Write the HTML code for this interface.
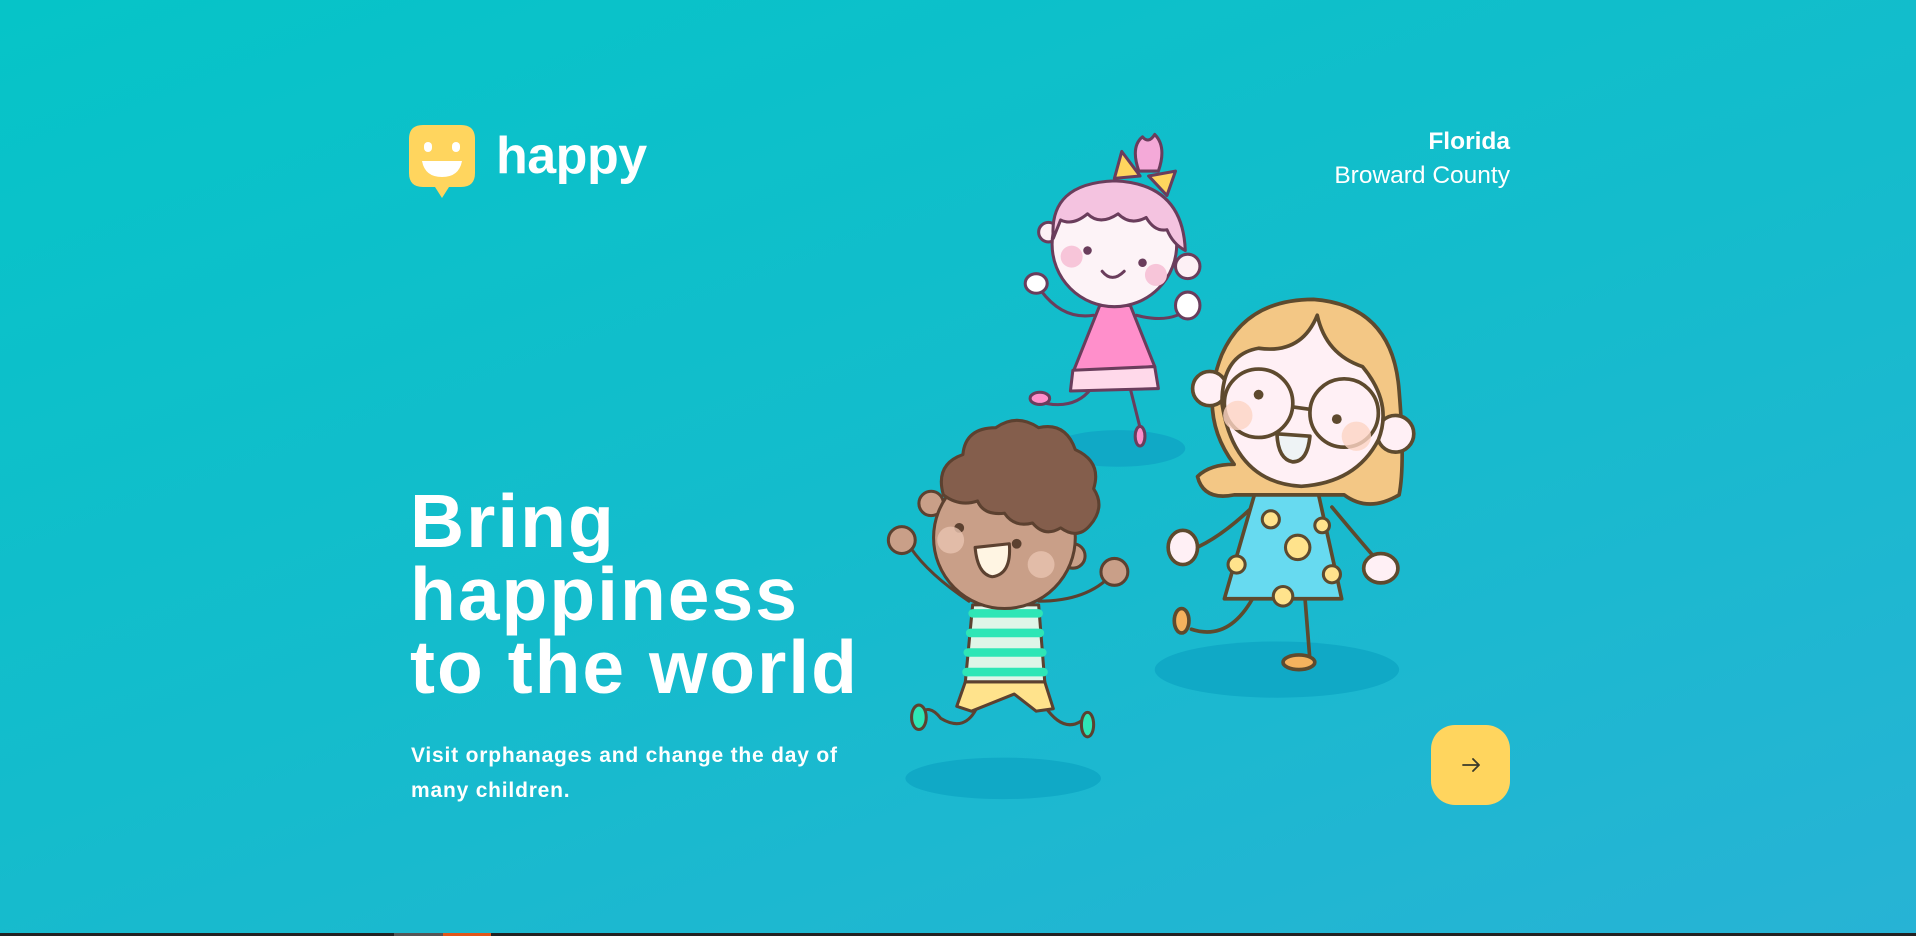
<!DOCTYPE html>
<html><head><meta charset="utf-8"><style>
html,body{margin:0;padding:0}
body{width:1916px;height:936px;overflow:hidden;position:relative;font-family:"Liberation Sans",sans-serif;color:#fff;
background:linear-gradient(160deg,#06c4c8 0%,#14bccc 50%,#27b3d5 100%)}
.logo{position:absolute;left:409px;top:125px}
.brand{position:absolute;left:496px;top:126px;font-size:52px;font-weight:bold;letter-spacing:-0.5px}
.loc{position:absolute;right:406px;top:125px;text-align:right;font-size:24.5px;line-height:34px}
h1{position:absolute;left:410px;top:485px;margin:0;font-size:75px;line-height:73px;font-weight:bold;letter-spacing:2px}
p{position:absolute;left:411px;top:738px;margin:0;font-size:21px;line-height:35px;font-weight:bold;letter-spacing:0.8px;width:490px}
.btn{position:absolute;left:1431px;top:725px;width:79px;height:80px;border-radius:24px;background:#ffd55e}
.bar{position:absolute;left:0;top:933px;width:1916px;height:3px;background:#222}
svg.ill{position:absolute;left:0;top:0}
</style></head><body>
<svg class="ill" width="1916" height="936" viewBox="0 0 1568 766">
<g fill="#10a9c6">
<ellipse cx="915" cy="367" rx="55" ry="15"/>
<ellipse cx="821" cy="637" rx="80" ry="17"/>
<ellipse cx="1045" cy="548" rx="100" ry="23"/>
</g>
<!-- pink girl -->
<g stroke="#6a3d5c" stroke-width="2.5" stroke-linecap="round" stroke-linejoin="round">
<path d="M895 258 Q870 262 852 238 M930 258 Q960 266 975 250 M893 318 Q880 335 855 330 M925 318 L935 358" fill="none"/>
<ellipse cx="848" cy="232" rx="9" ry="8" fill="#fff"/>
<ellipse cx="851" cy="326" rx="8" ry="5" fill="#ff8fcb"/>
<ellipse cx="933" cy="357" rx="4" ry="8" fill="#ff8fcb"/>
<path d="M900 250 L925 250 L945 300 L878 305 Z" fill="#ff8fcb"/>
<path d="M878 303 L945 300 L948 318 L876 320 Z" fill="#ffd9ea"/>
<circle cx="858" cy="190" r="8" fill="#fdf0f5"/>
<circle cx="972" cy="218" r="10" fill="#fdf0f5"/>
<circle cx="912" cy="200" r="51" fill="#fdf3f7"/>
<path d="M862 195 Q858 150 912 148 Q968 150 970 205 Q960 200 955 188 Q945 190 938 178 Q925 185 915 175 Q900 185 890 175 Q878 185 868 180 Z" fill="#f4c3e0"/>
<path d="M932 140 Q925 120 935 112 Q940 118 945 110 Q955 120 948 140 Z" fill="#f4a9d8"/>
<path d="M933 144 L918 124 L912 146 Z M940 144 L962 140 L955 160 Z" fill="#ffd55e"/>
<path d="M902 222 Q910 232 920 222" fill="none"/>
<ellipse cx="972" cy="250" rx="10" ry="11" fill="#fff"/>
</g>
<circle cx="890" cy="205" r="3.5" fill="#6a3d5c"/><circle cx="935" cy="215" r="3.5" fill="#6a3d5c"/>
<circle cx="877" cy="210" r="9" fill="#f7c5d9"/><circle cx="946" cy="225" r="9" fill="#f7c5d9"/>
<!-- boy -->
<g stroke="#5c4130" stroke-width="2.5" stroke-linecap="round" stroke-linejoin="round">
<path d="M793 492 Q760 470 745 448 M850 492 Q890 492 910 470 M800 578 Q790 600 770 588 Q760 575 752 585 M855 578 Q870 600 885 590" fill="none"/>
<ellipse cx="752" cy="587" rx="6" ry="10" fill="#2ee6b6"/>
<ellipse cx="890" cy="593" rx="5" ry="10" fill="#2ee6b6"/>
<path d="M790 558 L855 558 L862 580 L848 582 L830 568 L795 582 L783 578 Z" fill="#ffe38c"/>
<path d="M796 495 L850 495 L855 558 L790 558 Z" fill="#dff5e8"/>
<path d="M796 502 L850 502 M794 518 L851 518 M792 534 L853 534 M791 550 L854 550" stroke="#2ee6b6" stroke-width="7"/>
<circle cx="738" cy="442" r="11" fill="#c99f88"/>
<circle cx="912" cy="468" r="11" fill="#c99f88"/>
<circle cx="762" cy="412" r="10" fill="#c99f88"/>
<circle cx="878" cy="455" r="10" fill="#c99f88"/>
<circle cx="822" cy="440" r="58" fill="#c99f88"/>
<path d="M772 405 Q765 380 788 372 Q790 350 815 350 Q832 338 850 350 Q872 345 880 368 Q902 378 895 400 Q905 415 892 430 Q882 442 868 432 Q855 440 845 428 Q830 432 822 420 Q805 422 800 410 Q785 415 772 405 Z" fill="#845e4c"/>
<path d="M798 448 L826 445 Q828 470 812 472 Q800 470 798 448 Z" fill="#fff5e3"/>
</g>
<circle cx="785" cy="432" r="4" fill="#5c4130"/><circle cx="832" cy="445" r="4" fill="#5c4130"/>
<circle cx="778" cy="442" r="11" fill="#e8c3b0" opacity=".8"/><circle cx="852" cy="462" r="11" fill="#e8c3b0" opacity=".8"/>
<!-- blonde girl -->
<g stroke="#5e4a2e" stroke-width="3" stroke-linecap="round" stroke-linejoin="round">
<path d="M1030 410 Q1000 440 975 450 M1090 415 Q1115 445 1130 462 M1025 490 Q1005 525 975 515 M1068 490 L1072 540" fill="none"/>
<ellipse cx="967" cy="508" rx="6" ry="10" fill="#f4b25e"/>
<ellipse cx="1063" cy="542" rx="13" ry="6" fill="#f4b25e"/>
<ellipse cx="968" cy="448" rx="12" ry="14" fill="#fff0f5"/>
<ellipse cx="1130" cy="465" rx="14" ry="12" fill="#fff0f5"/>
<path d="M1028 400 L1078 400 L1098 490 L1002 490 Z" fill="#67daf0"/>
<path d="M1010 380 Q980 340 1000 290 Q1020 245 1075 245 Q1140 250 1145 320 Q1150 380 1145 405 Q1120 420 1100 405 L1010 405 Q985 410 980 390 Q990 380 1010 380 Z" fill="#f3c785"/>
<circle cx="990" cy="318" r="14" fill="#fff0f5"/>
<circle cx="1142" cy="355" r="15" fill="#fff0f5"/>
<path d="M1000 330 Q1000 290 1030 285 Q1065 290 1078 258 Q1085 290 1115 300 Q1140 330 1128 360 Q1110 395 1065 398 Q1010 395 1000 330 Z" fill="#fff0f5"/>
<circle cx="1030" cy="330" r="28" fill="none"/>
<circle cx="1100" cy="338" r="28" fill="none"/>
<path d="M1058 333 L1072 335" fill="none"/>
<path d="M1045 355 L1072 357 Q1070 378 1058 378 Q1046 376 1045 355 Z" fill="#eef3f5"/>
</g>
<g fill="#ffe38c" stroke="#5e4a2e" stroke-width="2.5">
<circle cx="1062" cy="448" r="10"/><circle cx="1040" cy="425" r="7"/><circle cx="1082" cy="430" r="6"/>
<circle cx="1012" cy="462" r="7"/><circle cx="1090" cy="470" r="7"/><circle cx="1050" cy="488" r="8"/>
</g>
<circle cx="1030" cy="323" r="4" fill="#5e4a2e"/><circle cx="1094" cy="343" r="4" fill="#5e4a2e"/>
<circle cx="1013" cy="340" r="12" fill="#fdd5c4" opacity=".8"/><circle cx="1110" cy="357" r="12" fill="#fdd5c4" opacity=".8"/>
</svg>
<svg class="logo" width="66" height="74" viewBox="0 0 66 74">
<path d="M14 0 H52 Q66 0 66 14 V48 Q66 62 52 62 H40 L33 73 L26 62 H14 Q0 62 0 48 V14 Q0 0 14 0 Z" fill="#ffd55e"/>
<rect x="15" y="17" width="8" height="10" rx="4" fill="#fff"/><rect x="43" y="17" width="8" height="10" rx="4" fill="#fff"/>
<path d="M13 36 H53 Q50 52 33 52 Q16 52 13 36 Z" fill="#fff"/>
</svg>
<div class="brand">happy</div>
<div class="loc"><b>Florida</b><br>Broward County</div>
<h1>Bring<br>happiness<br>to the world</h1>
<p>Visit orphanages and change the day of many children.</p>
<div class="btn"><svg width="79" height="80" viewBox="0 0 79 80"><path d="M32 40 H48 M42 34 L48 40 L42 46" stroke="#3a3a2a" stroke-width="1.8" fill="none" stroke-linecap="round" stroke-linejoin="round"/></svg></div>
<div class="bar"><div style="position:absolute;left:394px;width:49px;height:3px;background:#555"></div><div style="position:absolute;left:443px;width:48px;height:3px;background:#e0561a"></div></div>
</body></html>
